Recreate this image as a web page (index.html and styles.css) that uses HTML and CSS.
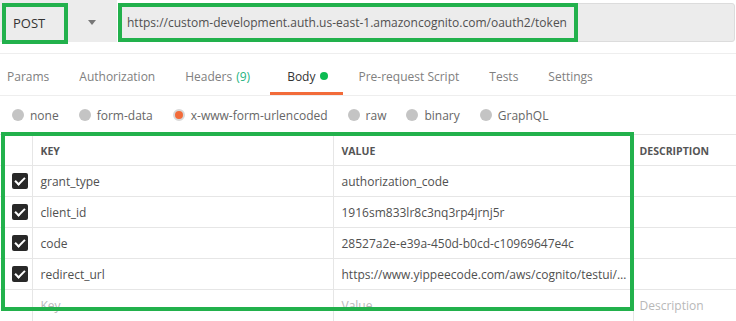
FILE: index.html
```html
<!DOCTYPE html>
<html lang="en">
<head>
  <meta charset="UTF-8"/>
  <title>Request</title>
  <link rel="stylesheet" href="styles.css">
</head>
<body>

  <!-- Request bar -->
  <div class="req-bar">
    <div class="method">
      <span class="method-name">POST</span>
      <span class="caret"></span>
    </div>
    <div class="url">https://custom-development.auth.us-east-1.amazoncognito.com/oauth2/token</div>
    <div class="mark mark-method"></div>
    <div class="mark mark-url"></div>
  </div>

  <!-- Tabs -->
  <div class="tabs">
    <span class="tab first">Params</span>
    <span class="tab">Authorization</span>
    <span class="tab headers">Headers <em class="count">(9)</em></span>
    <span class="tab active">Body <i class="dot"></i></span>
    <span class="tab">Pre-request Script</span>
    <span class="tab">Tests</span>
    <span class="tab">Settings</span>
  </div>

  <!-- Body types -->
  <div class="body-types">
    <label class="radio"><i></i>none</label>
    <label class="radio"><i></i>form-data</label>
    <label class="radio on"><i></i>x-www-form-urlencoded</label>
    <label class="radio"><i></i>raw</label>
    <label class="radio"><i></i>binary</label>
    <label class="radio"><i></i>GraphQL</label>
  </div>

  <!-- Params table -->
  <div class="table-wrap">
    <table class="kv">
      <tr class="head">
        <td class="c-check"></td>
        <td class="c-key">KEY</td>
        <td class="c-val">VALUE</td>
        <td class="c-desc">DESCRIPTION</td>
      </tr>
      <tr>
        <td class="c-check"><span class="box"></span></td>
        <td>grant_type</td>
        <td>authorization_code</td>
        <td></td>
      </tr>
      <tr>
        <td class="c-check"><span class="box"></span></td>
        <td>client_id</td>
        <td>1916sm833lr8c3nq3rp4jrnj5r</td>
        <td></td>
      </tr>
      <tr>
        <td class="c-check"><span class="box"></span></td>
        <td>code</td>
        <td>28527a2e-e39a-450d-b0cd-c10969647e4c</td>
        <td></td>
      </tr>
      <tr>
        <td class="c-check"><span class="box"></span></td>
        <td>redirect_url</td>
        <td class="short">https://www.yippeecode.com/aws/cognito/testui/&hellip;</td>
        <td></td>
      </tr>
      <tr class="empty">
        <td class="c-check"></td>
        <td>Key</td>
        <td>Value</td>
        <td>Description</td>
      </tr>
    </table>
    <div class="mark mark-table"></div>
  </div>

</body>
</html>
```

FILE: styles.css
```css
* { box-sizing: border-box; }
body {
  margin: 0;
  font-family: 'Open Sans', sans-serif;
  font-size: 12px;
  color: #505050;
  background: #fff;
  overflow: hidden;
  height: 321px;
}

/* Green annotation boxes */
.mark {
  position: absolute;
  border: 4px solid #22b14c;
  pointer-events: none;
}
.mark-method { left: 2px; top: 3px; width: 66px; height: 41px; }
.mark-url { left: 118px; top: 3px; width: 460px; height: 39px; }
.mark-table { left: 1px; top: -2px; width: 633px; height: 179px; }

/* Request bar */
.req-bar {
  position: relative;
  display: flex;
  height: 42px;
  border-bottom: 11px solid #fff;
  box-sizing: content-box;
}
.method {
  width: 117px;
  background: #ececec;
  display: flex; align-items: center;
  padding: 3px 0 0 13px;
}
.method-name { font-size: 13px; color: #333; width: 75px; }
.caret {
  width: 0; height: 0;
  border-left: 4px solid transparent;
  border-right: 4px solid transparent;
  border-top: 5px solid #777;
}
.url {
  flex: 1;
  margin: 3px 1px 0 1px;
  background: #ececec;
  border: 1px solid #dcdcdc;
  border-radius: 3px;
  display: flex; align-items: center;
  padding: 0 0 0 8px;
  font-size: 12px;
  color: #505050;
}

/* Tabs */
.tabs {
  display: flex;
  height: 43px;
  border-top: 1px solid #eee;
  border-bottom: 1px solid #eee;
  align-items: stretch;
}
.tab {
  padding: 6px 15px 0;
  display: flex; align-items: center;
  font-size: 12px;
  color: #808080;
  border-bottom: 3px solid transparent;
}
.tab.first { padding-left: 7px; }
.tab.headers { padding-right: 20px; }
.tab.active { color: #333; border-bottom-color: #f26b3a; padding: 6px 15px 0 17px; }
.count { font-style: normal; color: #26b47f; margin-left: 4px; }
.dot {
  width: 8px; height: 8px;
  border-radius: 50%;
  background: #0cbb52;
  margin-left: 5px;
}

/* Body type radios */
.body-types {
  display: flex;
  height: 38px;
  align-items: center;
  padding-left: 12px;
  gap: 20px;
}
.radio {
  display: flex; align-items: center;
  gap: 6px;
  font-size: 12px;
  color: #666;
}
.radio i {
  width: 12px; height: 12px;
  border-radius: 50%;
  background: #c4c4c4;
}
.radio.on i {
  background: #f26b3a;
  border: 2px solid #d8d8d8;
}

/* Table */
.table-wrap { position: relative; }
.kv {
  width: 100%;
  border-collapse: collapse;
  table-layout: fixed;
}
.kv td {
  height: 31px;
  border-top: 1px solid #e6e6e6;
  border-left: 1px solid #e6e6e6;
  padding: 0 8px;
  white-space: nowrap;
  overflow: hidden;
  font-size: 12px;
  color: #505050;
}
.kv td:first-child { border-left: none; }
.kv td:last-child { padding-left: 6px; }
.kv .c-check { width: 32px; padding: 0 0 0 12px; }
.kv .c-key { width: 301px; }
.kv .c-val { width: 300px; }
.kv .head td {
  font-size: 10.5px;
  font-weight: bold;
  color: #555;
  padding-top: 2px;
}
.kv .empty td { color: #b8b8b8; }
.kv td.short { padding-right: 2px; }
.box {
  display: block;
  width: 16px; height: 16px;
  border-radius: 2px;
  background: #282828;
  position: relative;
}
.box::after {
  content: "";
  position: absolute;
  left: 5px; top: 2px;
  width: 4px; height: 8px;
  border: solid #fff;
  border-width: 0 2.5px 2.5px 0;
  transform: rotate(45deg);
}
```
